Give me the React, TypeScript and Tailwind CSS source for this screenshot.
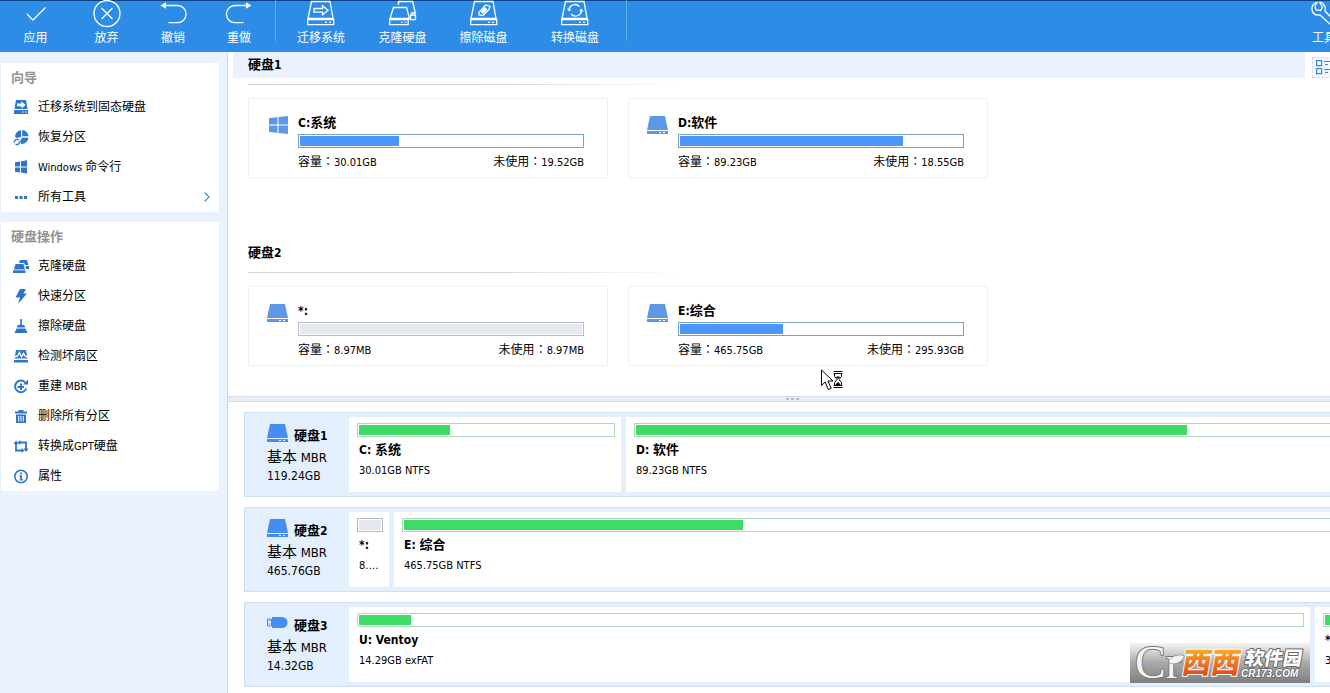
import type { ReactNode } from "react";
import clsx from "clsx";

// Latin runs are set one step smaller than the Chinese text around them,
// and the fullwidth colon is centred in its cell
function Mixed({ text, latin = "text-[11px]" }: { text: string; latin?: string }) {
  const parts = text.split(/([\x20-\x7e]+|\uff1a)/).filter(Boolean);
  return (
    <>
      {parts.map((part, i) => {
        if (part === "\uff1a") {
          return (
            <span key={i} className="font-['Noto_Sans_CJK_TC']">
              {part}
            </span>
          );
        }
        return /^[\x20-\x7e]+$/.test(part) ? (
          <span key={i} className={latin}>
            {part}
          </span>
        ) : (
          <span key={i}>{part}</span>
        );
      })}
    </>
  );
}

/* ---------- toolbar icons ---------- */

function LineIcon({ children }: { children: ReactNode }) {
  return (
    <svg
      viewBox="0 0 28 28"
      className="h-7 w-7 shrink-0"
      fill="none"
      stroke="currentColor"
      strokeWidth="1.3"
    >
      {children}
    </svg>
  );
}

function DriveOutline() {
  return (
    <>
      <path d="M4.5 1.5h18.5l3 17h-25z" />
      <path d="M.7 19.5h26v5.2h-26z" />
      <path d="M18 22.3h2M22 22.3h2" />
    </>
  );
}

const toolIcons = {
  apply: <path d="m5 14 6 6L23.5 7.5" />,
  discard: (
    <>
      <circle cx="14" cy="13.5" r="13" />
      <path d="m8.5 8 11 11M19.5 8l-11 11" />
    </>
  ),
  undo: (
    <>
      <path d="M5 5.500h13.500a8.600 8.600 0 0 1 0 17.200H9.500" />
      <path d="M7 2.300v6.400L1.500 5.500z" fill="currentColor" stroke="none" />
    </>
  ),
  redo: (
    <>
      <path d="M23 5.500H10a8.600 8.600 0 0 0 0 17.200h8.500" />
      <path d="M21 2.300v6.400l5.500-3.200z" fill="currentColor" stroke="none" />
    </>
  ),
  migrate: (
    <>
      <DriveOutline />
      <path d="M7 8.500h8.500V5.700l5.500 4.600-5.500 4.600v-2.800H7z" />
    </>
  ),
  clone: (
    <>
      <path d="M4.500 7.500h13l3 11H1z" />
      <path d="M.7 19.500h18.500v5.200H.7z" />
      <path d="M12 22.300h1.500M15.500 22.300H17" />
      <path d="M9.500 5V1.500h14.200l2.600 11.500h-4.500" />
      <path d="M21.500 15h5v4.700h-5z" />
    </>
  ),
  erase: (
    <>
      <DriveOutline />
      <path d="M9 12.500 15.500 5l4.500 1.500-1 3-6 6-4-.5z" />
      <path d="m11.500 11.500 3.500-3.500 1.500 1.500-3.500 3.500z" fill="currentColor" />
    </>
  ),
  convert: (
    <>
      <DriveOutline />
      <path d="M8 9.500a6 6 0 0 1 10.500-2.800M20.500 10.500A6 6 0 0 1 10 14" />
      <path d="m6 8.500 2 3 2.500-2.500zM22.500 11.500l-2-3-2.500 2.800z" fill="currentColor" stroke="none" />
    </>
  ),
  tools: (
    <path d="M7 2.500C3.500 3 1.500 6 2 10c.8 3.500 4 5.500 8 5l10 9c3 2.500 6-1 4-3.500l-9-9.500c1-4-1-8-5-8.800L9.800 3l2.700 4-2 3.500-4.500-.5L5 6z" />
  ),
};

function ToolButton({
  icon,
  label,
  className,
}: {
  icon: keyof typeof toolIcons;
  label: string;
  className: string;
}) {
  return (
    <button className={clsx("flex shrink-0 flex-col items-center", className)}>
      <LineIcon>{toolIcons[icon]}</LineIcon>
      <span className="h-5 leading-5 whitespace-nowrap">{label}</span>
    </button>
  );
}

function Toolbar() {
  return (
    <header className="flex h-[52px] overflow-hidden bg-[#2d8de6] text-white shadow-[inset_0_1px_#0d4380]">
      <ToolButton icon="apply" label="应用" className="w-[71px]" />
      <ToolButton icon="discard" label="放弃" className="w-[71px]" />
      <ToolButton icon="undo" label="撤销" className="w-[62px]" />
      <ToolButton icon="redo" label="重做" className="w-[70px]" />
      <div className="mr-1 ml-px h-[41px] w-px shrink-0 bg-[#62aef2]" />
      <ToolButton icon="migrate" label="迁移系统" className="w-[82px]" />
      <ToolButton icon="clone" label="克隆硬盘" className="w-[81px]" />
      <ToolButton icon="erase" label="擦除磁盘" className="w-[81px]" />
      <ToolButton icon="convert" label="转换磁盘" className="w-[102px]" />
      <div className="h-[41px] w-px shrink-0 bg-[#62aef2]" />
      <ToolButton icon="tools" label="工具" className="-mr-[18px] ml-auto w-12" />
    </header>
  );
}

/* ---------- solid icons ---------- */

function DriveIcon({ className }: { className?: string }) {
  return (
    <svg viewBox="0 0 21 18" className={className} fill="currentColor">
      <path d="M3 0h15l3 14H0z" />
      <path d="M0 15h21v3H0zm12 1v1h2v-1zm4 0v1h2v-1z" fillRule="evenodd" />
    </svg>
  );
}

function WindowsIcon({ className }: { className?: string }) {
  return (
    <svg viewBox="0 0 18 17" className={className} fill="currentColor">
      <path d="M0 2l8-1v7H0zM9 1l9-1v8H9zM0 9h8v7l-8-1zM9 9h9v8l-9-1z" />
    </svg>
  );
}

function UsbIcon({ className }: { className?: string }) {
  return (
    <svg viewBox="0 0 21 18" className={className}>
      <path d="M.5 5h4v7h-4z" fill="none" stroke="currentColor" />
      <path d="M1.500 6.500h2M1.500 10h2" stroke="currentColor" />
      <path d="M5 3h10a5.500 5.500 0 0 1 0 11H5z" fill="currentColor" />
    </svg>
  );
}

const sideIcons = {
  migrate: (
    <>
      <path d="M3 1h10l1.500 9h-13z" />
      <path d="M1 11h14v4H1z" />
      <path d="M4 4.500h4.500V2.300L12.500 6l-4 3.500V7.300H4z" fill="#fff" />
      <path d="M9 13h1.500M12 13h1.500" stroke="#fff" />
    </>
  ),
  recover: (
    <>
      <path d="M8 1v7l-4.500 1L2 7.500A6.800 6.800 0 0 1 8 1zM9.200 1a6.800 6.800 0 0 1 6.300 6.300H9.200zM15.500 8.700a6.800 6.800 0 0 1-7.200 6.200L7 12.500l2-3.800z" />
      <path
        d="M1.500 13.500A2.500 2.500 0 0 1 6 11.500M6.500 12.500A2.500 2.500 0 0 1 2.500 15"
        fill="none"
        stroke="currentColor"
        strokeWidth="1.3"
      />
    </>
  ),
  windows: <path d="M2 3.200l5-.8v5.100H2zM8 2.200l6-1v6.300H8zM2 8.500h5v5l-5-.8zM8 8.500h6v6l-6-.9z" />,
  more: <path d="M2 7h3v3H2zM6.500 7h3v3h-3zM11 7h3v3h-3z" />,
  clone: (
    <>
      <path d="M2.500 6h8l1.500 5.500H1z" />
      <path d="M0 12.300h12.500V15H0z" />
      <path d="M6 5l1-3h7l1.500 5H12l-1-2zM12.500 8H16v3h-3z" />
    </>
  ),
  quick: <path d="M7 1h6l-2.500 4.500H14L5 16l2-6.500H2.500z" />,
  erase: (
    <path d="M7.200 1h1.600v5.500l3.200 1.300v1.700H4V7.800l3.200-1.300zM3.500 10.500h9L14.500 15h-13z" />
  ),
  scan: (
    <>
      <path d="M3 2h10l1.500 8.500h-13zM1 12h14v2.500H1z" />
      <path d="M1.500 9l3-1 2-3.500L8.500 9l2-3.500L12 8l2.500 1" fill="none" stroke="#fff" strokeWidth="1.4" />
    </>
  ),
  rebuild: (
    <>
      <path
        d="M13.300 10.500A5.800 5.800 0 1 1 12 4.300"
        fill="none"
        stroke="currentColor"
        strokeWidth="2"
      />
      <path d="M10 6.500h5V1.500z" />
      <path d="M7 5.500h2V8h2v2H9v2H7v-2H4.500V8H7z" />
    </>
  ),
  remove: (
    <>
      <path d="M5.500 2h5v1.500H14v2H2v-2h3.500zM3 6.500h10V15H3z" />
      <path d="M5.700 8v5.500M8 8v5.500M10.300 8v5.500" stroke="#fff" strokeWidth="1" />
    </>
  ),
  convert: (
    <>
      <path d="M3 5v7.500h6M13 11V4.500H7" fill="none" stroke="currentColor" strokeWidth="1.8" />
      <path d="M.5 6h5L3 2.500zM7.500 2v5L4.500 4.500zM15.500 10.500h-5l2.500 3.500zM8.500 10v5l3-2.500z" />
    </>
  ),
  info: (
    <>
      <circle cx="8" cy="8.500" r="6.200" fill="none" stroke="currentColor" strokeWidth="1.6" />
      <path d="M7.200 4.500h1.800v1.800H7.200zM6.500 7.300H9v4h1v1.200H6.500v-1.200h.8V8.500h-.8z" />
    </>
  ),
};

type SideItem = { icon: keyof typeof sideIcons; label: string; arrow?: boolean };

const wizardItems: SideItem[] = [
  { icon: "migrate", label: "迁移系统到固态硬盘" },
  { icon: "recover", label: "恢复分区" },
  { icon: "windows", label: "Windows 命令行" },
  { icon: "more", label: "所有工具", arrow: true },
];

const diskItems: SideItem[] = [
  { icon: "clone", label: "克隆硬盘" },
  { icon: "quick", label: "快速分区" },
  { icon: "erase", label: "擦除硬盘" },
  { icon: "scan", label: "检测坏扇区" },
  { icon: "rebuild", label: "重建 MBR" },
  { icon: "remove", label: "删除所有分区" },
  { icon: "convert", label: "转换成GPT硬盘" },
  { icon: "info", label: "属性" },
];

function SidePanel({ title, items }: { title: string; items: SideItem[] }) {
  return (
    <section className="bg-white">
      <h2 className="h-[29px] pl-2.5 text-[13px] leading-[29px] font-bold text-[#929292]">{title}</h2>
      <ul>
        {items.map((item) => (
          <li key={item.label}>
            <button className="flex h-[30px] w-full items-center pr-2 pl-3 text-left">
              <svg viewBox="0 0 16 17" className="mr-[9px] h-[17px] w-4 text-[#2f75cc]" fill="currentColor">
                {sideIcons[item.icon]}
              </svg>
              <span className="flex-1">
                <Mixed text={item.label} />
              </span>
              {item.arrow && (
                <svg viewBox="0 0 8 12" className="h-3 w-2" fill="none" stroke="#4a90d9" strokeWidth="1.2">
                  <path d="M1.500 1.500 6 6l-4.500 4.500" />
                </svg>
              )}
            </button>
          </li>
        ))}
      </ul>
    </section>
  );
}

/* ---------- partition cards ---------- */

type Volume = {
  name: string;
  capacity: string;
  unused: string;
  used: number;
  windows?: boolean;
  unknown?: boolean;
};

const groups: { disk: string; volumes: Volume[] }[] = [
  {
    disk: "硬盘1",
    volumes: [
      { name: "C:系统", capacity: "30.01GB", unused: "19.52GB", used: 35, windows: true },
      { name: "D:软件", capacity: "89.23GB", unused: "18.55GB", used: 79.2 },
    ],
  },
  {
    disk: "硬盘2",
    volumes: [
      { name: "*:", capacity: "8.97MB", unused: "8.97MB", used: 100, unknown: true },
      { name: "E:综合", capacity: "465.75GB", unused: "295.93GB", used: 36.4 },
    ],
  },
];

function VolumeCard({ volume }: { volume: Volume }) {
  return (
    <article className="flex h-20 w-[360px] border border-[#f0f0f2] pt-[15px] pr-[23px] pl-[18px]">
      <div className="mr-2.5 w-[21px] shrink-0 pt-0.5 text-[#5c98e6]">
        {volume.windows ? (
          <WindowsIcon className="ml-0.5 h-[18px] w-[19px]" />
        ) : (
          <DriveIcon className="h-[18px] w-[21px]" />
        )}
      </div>
      <div className="min-w-0 flex-1">
        <h3 className="h-5 text-[13px] leading-[18px] font-bold">
          <Mixed text={volume.name} latin="text-[12px]" />
        </h3>
        <div
          className={clsx(
            "h-3.5 border p-px",
            volume.unknown ? "border-[#b4bcc8]" : "border-[#7c9fc4]"
          )}
        >
          <div
            className={clsx("h-full", volume.unknown ? "bg-[#e6e7ef]" : "bg-[#4a96fa]")}
            style={{ width: `${volume.used}%` }}
          />
        </div>
        <p className="mt-1 flex h-[18px] justify-between leading-[18px]">
          <span>
            <Mixed text={"容量\uff1a" + volume.capacity} />
          </span>
          <span>
            <Mixed text={"未使用\uff1a" + volume.unused} />
          </span>
        </p>
      </div>
    </article>
  );
}

function VolumeGroup({ disk, volumes, active }: { disk: string; volumes: Volume[]; active?: boolean }) {
  return (
    <section>
      <div className="flex h-[26px] pl-[5px]">
        <h2 className={clsx("flex-1 pl-[15px] text-[13px] leading-[26px] font-bold", active && "bg-[#eaf3fd]")}>
          <Mixed text={disk} latin="text-[12px]" />
        </h2>
        {active && (
          <button
            aria-label="视图"
            className="mt-[5px] -mr-1 ml-[7px] h-[21px] w-[22px] border border-dashed border-[#cfdcec] bg-[#f3f8fe] pl-[3px]"
          >
            <svg viewBox="0 0 18 15" className="h-[15px] w-[18px]" fill="none" stroke="#3f86d6" strokeWidth="1.2">
              <path d="M.6.6h5v5h-5zM.6 8.600h5v5h-5zM8 1.500h8M9 4.500h3M8 9.500h8M9 12.500h3" />
            </svg>
          </button>
        )}
      </div>
      <div className="mt-1.5 ml-5 h-px w-[440px] bg-linear-to-r from-[#d2d2d6] from-50% to-white" />
      <div className="mt-[13px] ml-5 flex gap-5">
        {volumes.map((volume) => (
          <VolumeCard key={volume.name} volume={volume} />
        ))}
      </div>
    </section>
  );
}

/* ---------- disk map ---------- */

type Cell = { name: string; info: string; used: number; width: string; unknown?: boolean };

const disks: { name: string; size: string; usb?: boolean; cells: Cell[] }[] = [
  {
    name: "硬盘1",
    size: "119.24GB",
    cells: [
      { name: "C: 系统", info: "30.01GB NTFS", used: 36, width: "w-[272px]" },
      { name: "D: 软件", info: "89.23GB NTFS", used: 77.5, width: "flex-1" },
    ],
  },
  {
    name: "硬盘2",
    size: "465.76GB",
    cells: [
      { name: "*:", info: "8.97MB", used: 100, width: "w-10", unknown: true },
      { name: "E: 综合", info: "465.75GB NTFS", used: 36, width: "flex-1" },
    ],
  },
  {
    name: "硬盘3",
    size: "14.32GB",
    usb: true,
    cells: [
      { name: "U: Ventoy", info: "14.29GB exFAT", used: 5.5, width: "flex-1" },
      { name: "*:", info: "32.00MB", used: 100, width: "w-10" },
    ],
  },
];

function DiskRow({ disk }: { disk: (typeof disks)[number] }) {
  return (
    <section className="flex h-[85px] gap-[5px] border border-[#cddff1] bg-[#e3effc] py-1 pr-1">
      <div className="w-[99px] shrink-0 pt-2.5 pl-[22px]">
        <h3 className="flex h-[18px] text-[13px] font-bold">
          <span className="-mt-[3px] mr-1.5 text-[#458df0]">
            {disk.usb ? (
              <UsbIcon className="h-[18px] w-[21px]" />
            ) : (
              <DriveIcon className="h-[18px] w-[21px]" />
            )}
          </span>
          <span className="leading-[18px]">
            <Mixed text={disk.name} latin="text-[12px]" />
          </span>
        </h3>
        <p className="mt-0.5 h-5 text-[15px] leading-5">
          <Mixed text="基本 MBR" latin="text-[13px]" />
        </p>
        <p className="leading-[18px]">{disk.size}</p>
      </div>
      {disk.cells.map((cell) => (
        <div key={cell.name} className={clsx("min-w-0 shrink-0 bg-white pt-1.5 pr-1.5 pl-2", cell.width)}>
          <div
            className={clsx(
              "h-3.5 border p-px",
              cell.unknown ? "border-[#b4bcc8]" : "border-[#b3d9bf]"
            )}
          >
            <div
              className={clsx("h-full", cell.unknown ? "bg-[#e6e7ef]" : "bg-[#3ddc66]")}
              style={{ width: `${cell.used}%` }}
            />
          </div>
          <h4 className="mt-1 h-[18px] truncate pl-0.5 text-[13px] leading-[18px] font-bold">
            <Mixed text={cell.name} latin="text-[12px]" />
          </h4>
          <p className="mt-[3px] h-[18px] truncate pl-0.5 text-[11px] leading-[18px]">{cell.info}</p>
        </div>
      ))}
    </section>
  );
}

function Watermark() {
  return (
    <svg viewBox="0 0 180 40" className="absolute right-5 bottom-2.5 h-10 w-[180px]">
      <defs>
        <linearGradient id="shade" x1="0" y1="0" x2="0" y2="1">
          <stop offset="0" stopColor="#9a9a9a" stopOpacity="0.1" />
          <stop offset="0.5" stopColor="#9a9a9a" stopOpacity="0.85" />
          <stop offset="1" stopColor="#7d7d7d" />
        </linearGradient>
        <linearGradient id="orange" x1="0" y1="0" x2="0" y2="1">
          <stop offset="0.2" stopColor="#fbb02c" />
          <stop offset="0.9" stopColor="#e2441a" />
        </linearGradient>
      </defs>
      <rect width="180" height="40" fill="url(#shade)" />
      <g paintOrder="stroke" strokeLinejoin="round">
        <text x="5" y="35" fontSize="46" fontFamily="Liberation Serif" fill="#f4f4f4" stroke="#777" strokeWidth="2">
          Cr
        </text>
        <path d="M39 18c3-5 9-7 15-5-2 6-9 9-14 7z" fill="#f4f4f4" stroke="#777" />
        <g transform="skewX(-10)" fontFamily="Noto Sans CJK SC" fontWeight="900">
          <text x="56" y="30" fontSize="29" fill="url(#orange)" stroke="#fff" strokeWidth="2">
            西西
          </text>
          <text x="118" y="22" fontSize="19" fill="#fff" stroke="#666" strokeWidth="2">
            软件园
          </text>
        </g>
        <text
          x="111"
          y="34"
          fontSize="10"
          fontFamily="Liberation Sans"
          fontWeight="700"
          fontStyle="italic"
          fill="#fff"
          stroke="#666"
          strokeWidth="1.5"
        >
          CR173.COM
        </text>
      </g>
    </svg>
  );
}

function BusyCursor() {
  return (
    <svg viewBox="0 0 23 22" className="absolute bottom-[5px] left-[593px] h-[22px] w-[23px]" fill="#fff" stroke="#000">
      <path d="M.5 1v15.500l3.700-3.500 3 7.500 3-1.200-3.200-7.300h5z" />
      <path d="M12.500 2.500h9M12.500 4.500h9M12.500 16.500h9M12.500 18.500h9" />
      <path d="M13.500 4.500v3l2.500 3-2.500 3v3h7v-3l-2.500-3 2.500-3v-3z" />
      <path d="M15.500 8h3L17 9.500zM15 15.500l2-2 2 2z" fill="#000" />
    </svg>
  );
}

export default function App() {
  return (
    <div className="flex min-h-screen flex-col overflow-hidden bg-white font-['DejaVu_Sans_Condensed','Noto_Sans_CJK_SC',sans-serif] text-[12px] text-black">
      <Toolbar />
      <div className="flex flex-1">
        <aside className="flex w-[228px] shrink-0 flex-col gap-2.5 border-r border-[#ccd9ec] bg-[#eaf2fe] pt-[11px] pr-2 pl-px">
          <SidePanel title="向导" items={wizardItems} />
          <SidePanel title="硬盘操作" items={diskItems} />
        </aside>

        <main className="relative min-w-0 flex-1 overflow-hidden">
          <div className="relative flex flex-col gap-[62px] pb-[30px]">
            {groups.map((group, i) => (
              <VolumeGroup key={group.disk} {...group} active={i === 0} />
            ))}
            <BusyCursor />
          </div>

          {/* Splitter */}
          <div className="flex h-1.5 items-center justify-center gap-0.5 border-y border-[#d3dce8] bg-[#e9eef6] pl-[26px]">
            <i className="h-0.5 w-[3px] bg-[#b4bccb]" />
            <i className="h-0.5 w-[3px] bg-[#b4bccb]" />
            <i className="h-0.5 w-[3px] bg-[#b4bccb]" />
          </div>

          {/* the map is wider than the window and runs off its right edge */}
          <div className="-mr-[30px] flex flex-col gap-2.5 pt-2.5 pl-4">
            {disks.map((disk) => (
              <DiskRow key={disk.name} disk={disk} />
            ))}
          </div>
          <Watermark />
        </main>
      </div>
    </div>
  );
}
